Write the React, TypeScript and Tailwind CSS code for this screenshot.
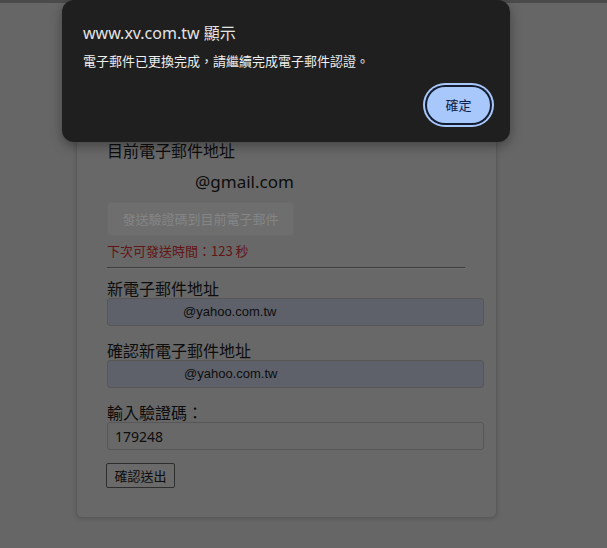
import React from "react";

const cjk = "'Noto Sans CJK TC', 'Noto Sans', sans-serif";
const latin = "'Noto Sans', 'Noto Sans CJK TC', sans-serif";
const arial = "'Liberation Sans', 'Noto Sans CJK TC', sans-serif";

export default function App() {
  return (
    <div className="relative w-[607px] h-[548px] bg-[#666666] overflow-hidden" style={{ fontFamily: cjk }}>
      <div className="h-[3px] bg-[#4b4b4b]" />
      <div className="ml-[76px] mt-[107px] w-[421px] rounded-md border border-[#5a5a5a] bg-[#686868] pl-[30px] pt-[29px] pb-[29px] shadow-[0_1px_4px_rgba(0,0,0,0.15)]">
        <div className="text-[16px] leading-[20px] text-[#0d0d0d]">目前電子郵件地址</div>
        <div className="mt-[12px] pl-[88px] text-[17px] leading-[20px] text-[#0d0d0d]" style={{ fontFamily: latin }}>
          @gmail.com
        </div>
        <button
          disabled
          className="mt-[10px] flex h-[34px] w-[187px] items-center justify-center rounded-[4px] bg-[#6e6e6e] border border-[#6a6a6a] text-[13px] text-[#858585]"
        >
          發送驗證碼到目前電子郵件
        </button>
        <div className="mt-[7px] text-[13px] leading-[16px] text-[#621515]">下次可發送時間：123 秒</div>
        <div className="mt-[8px] h-0 w-[358px] border-t border-[#3e3e3e] shadow-[0_1px_0_rgba(120,120,120,0.4)]" />
        <div className="mt-[10px] text-[16px] leading-[20px] text-[#0d0d0d]">新電子郵件地址</div>
        <div
          className="flex h-[28px] w-[377px] items-center rounded-[3px] border border-[#575757] bg-[#5e616a] pl-[75px] text-[13px] text-[#0d0d0d]"
          style={{ fontFamily: arial }}
        >
          @yahoo.com.tw
        </div>
        <div className="mt-[14px] text-[16px] leading-[20px] text-[#0d0d0d]">確認新電子郵件地址</div>
        <div
          className="flex h-[28px] w-[377px] items-center rounded-[3px] border border-[#575757] bg-[#5e616a] pl-[76px] text-[13px] text-[#0d0d0d]"
          style={{ fontFamily: arial }}
        >
          @yahoo.com.tw
        </div>
        <div className="mt-[14px] text-[16px] leading-[20px] text-[#0d0d0d]">輸入驗證碼：</div>
        <div
          className="flex h-[28px] w-[377px] items-center rounded-[3px] border border-[#575757] bg-[#686868] pl-[7px] text-[14px] text-[#0d0d0d]"
          style={{ fontFamily: latin }}
        >
          179248
        </div>
        <button className="mt-[13px] -ml-[1px] flex h-[25px] w-[69px] items-center justify-center rounded-[2px] border border-[#2e2e2e] bg-[#6a6a6a] text-[13px] text-[#0d0d0d]">
          確認送出
        </button>
      </div>

      <div className="absolute left-[62px] top-0 h-[142px] w-[448px] rounded-[12px] bg-[#1f1f1f] pl-[21px] pt-[22px] shadow-[0_4px_12px_rgba(0,0,0,0.35)]">
        <div className="text-[16px] leading-[20px] text-[#e3e3e3]" style={{ fontFamily: latin }}>
          www.xv.com.tw <span style={{ fontFamily: cjk }}>顯示</span>
        </div>
        <div className="mt-[9px] text-[13px] leading-[18px] text-[#eeeeee]">電子郵件已更換完成，請繼續完成電子郵件認證。</div>
        <div className="mt-[17px] flex justify-end pr-[20px]">
          <button className="flex h-[36px] w-[63px] items-center justify-center rounded-full bg-[#a8c7fa] text-[13px] text-[#0b1d4a] shadow-[0_0_0_2px_#131c30,0_0_0_4px_#a8c7fa]">
            確定
          </button>
        </div>
      </div>
    </div>
  );
}
